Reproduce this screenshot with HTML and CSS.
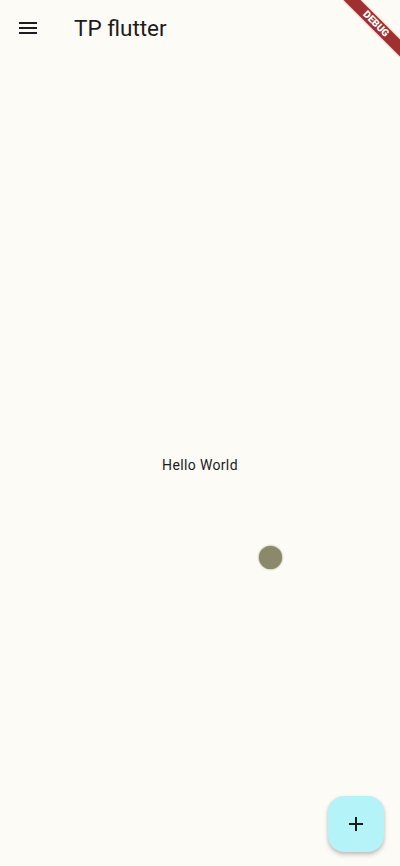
FILE: index.html
```html
<!DOCTYPE html>
<html>
<head>
<meta charset="utf-8">
<link rel="stylesheet" href="styles.css">
</head>
<body>
<div class="app">
  <header class="appbar">
    <button class="menu-btn" aria-label="menu">
      <svg width="24" height="24" viewBox="0 0 24 24"><path d="M3 18h18v-2H3v2zm0-5h18v-2H3v2zm0-7v2h18V6H3z" fill="#1d1b20"/></svg>
    </button>
    <h1 class="title">TP flutter</h1>
  </header>
  <main class="body">
    <p class="hello">Hello World</p>
  </main>
  <div class="touch-dot"></div>
  <button class="fab" aria-label="add">
    <svg width="24" height="24" viewBox="0 0 24 24"><path d="M19 13h-6v6h-2v-6H5v-2h6V5h2v6h6v2z" fill="#1a1c1c"/></svg>
  </button>
  <div class="debug-banner"><span>DEBUG</span></div>
</div>
</body>
</html>
```
FILE: styles.css
```css
html, body {
  margin: 0;
  padding: 0;
  height: 100%;
}
body {
  background: #fcfbf5;
  font-family: Roboto, "Noto Sans", sans-serif;
  color: #1d1b20;
  overflow: hidden;
}
.app {
  position: relative;
  height: 866px;
  display: flex;
  flex-direction: column;
  overflow: hidden;
}
.appbar {
  height: 56px;
  display: flex;
  align-items: center;
  padding: 0 4px;
  flex: none;
}
.menu-btn {
  width: 48px;
  height: 48px;
  border: 0;
  background: none;
  padding: 0;
  display: flex;
  align-items: center;
  justify-content: center;
}
.title {
  margin: 0 0 0 22px;
  font-size: 22.5px;
  font-weight: 400;
  line-height: 28px;
  color: #1d1b20;
}
.body {
  flex: 1;
  display: flex;
  align-items: center;
  justify-content: center;
  padding-top: 8px;
}
.hello {
  margin: 0;
  font-size: 14px;
  line-height: 20px;
  letter-spacing: 0.35px;
  color: #1d1b20;
}
.touch-dot {
  position: absolute;
  left: 259px;
  top: 546px;
  width: 23px;
  height: 23px;
  border-radius: 50%;
  background: #8a896a;
  box-shadow: 0 0 1.5px 0.5px rgba(138, 137, 106, 0.7);
}
.fab {
  position: absolute;
  right: 16px;
  bottom: 14px;
  width: 56px;
  height: 56px;
  border: 0;
  border-radius: 16px;
  background: #b4f3f7;
  display: flex;
  align-items: center;
  justify-content: center;
  padding: 0;
  box-shadow: 0 3px 5px rgba(0,0,0,0.18), 0 1px 3px rgba(0,0,0,0.12);
}
.debug-banner {
  position: absolute;
  left: 336px;
  top: 18px;
  width: 80px;
  height: 12px;
  background: #a03030;
  transform: rotate(45deg);
  display: flex;
  align-items: center;
  justify-content: center;
  box-shadow: 0 0 3px rgba(127,0,0,0.3);
}
.debug-banner span {
  color: #fff;
  font-size: 10px;
  font-weight: 900;
  line-height: 1;
  letter-spacing: 0;
}
```
